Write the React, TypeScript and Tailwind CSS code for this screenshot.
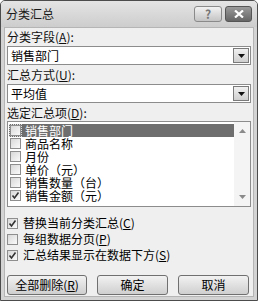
import React from 'react';

const fields = [
  { name: '销售部门', checked: false, active: true },
  { name: '商品名称', checked: false },
  { name: '月份', checked: false },
  { name: '单价（元）', checked: false },
  { name: '销售数量（台）', checked: false },
  { name: '销售金额（元）', checked: true },
];

function Check({ checked }: { checked: boolean }) {
  return (
    <span className="relative flex h-[11px] w-[11px] shrink-0 items-center justify-center border border-[#8e8e8e] bg-gradient-to-br from-[#d8d8d8] to-[#fafafa]">
      {checked && (
        <svg width="9" height="9" viewBox="0 0 9 9">
          <path d="M1.5 4.5 L3.5 7 L7.5 1.5" fill="none" stroke="#333" strokeWidth="1.6" />
        </svg>
      )}
    </span>
  );
}

function Combo({ value }: { value: string }) {
  return (
    <div className="flex h-[19px] items-center border border-[#8c8c8c] bg-white pl-[3px] pr-[1px]">
      <span className="flex-1 leading-none">{value}</span>
      <span className="flex h-[15px] w-[16px] items-center justify-center border border-[#7a7a7a] bg-gradient-to-b from-[#f0f0f0] to-[#cfcfcf]">
        <svg width="7" height="4" viewBox="0 0 7 4">
          <path d="M0 0 H7 L3.5 4 Z" fill="#111" />
        </svg>
      </span>
    </div>
  );
}

function Label({ text, hot }: { text: string; hot: string }) {
  return (
    <div className="h-[14px] leading-[14px] text-[#111]">
      {text}(<u>{hot}</u>):
    </div>
  );
}

export default function App() {
  return (
    <div className="h-[301px] w-[258px] bg-white font-['Noto_Sans_CJK_SC',sans-serif] text-[12px] text-black">
      <div className="flex h-full w-full flex-col overflow-hidden rounded-t-[5px] border border-[#4c4c4c] bg-[#d3d3d3]">
        {/* title bar */}
        <div className="flex h-[26px] shrink-0 items-center justify-between bg-gradient-to-b from-[#e4e4e4] to-[#cdcdcd] pl-[5px] pr-[5px]">
          <span className="text-[12px] text-[#1a1a1a]">分类汇总</span>
          <div className="flex gap-[3px]">
            <div className="flex h-[16px] w-[28px] items-center justify-center rounded-[3px] border border-[#8a8a8a] bg-gradient-to-b from-[#f2f2f2] to-[#c4c4c4] text-[12px] font-bold leading-none text-[#777]">
              ?
            </div>
            <div className="flex h-[16px] w-[27px] items-center justify-center rounded-[3px] border border-[#555] bg-gradient-to-b from-[#9a9a9a] to-[#666]">
              <svg width="10" height="8" viewBox="0 0 10 8">
                <path d="M1 0.5 L9 7.5 M9 0.5 L1 7.5" stroke="#fff" strokeWidth="2.2" />
              </svg>
            </div>
          </div>
        </div>

        {/* client area */}
        <div className="mx-[3px] mb-[3px] flex flex-1 flex-col border border-[#b5b5b5] bg-[#efefef] px-[2px] pt-[2px]">
          <Label text="分类字段" hot="A" />
          <div className="mt-[2px]">
            <Combo value="销售部门" />
          </div>
          <div className="mt-[3px]">
            <Label text="汇总方式" hot="U" />
          </div>
          <div className="mt-[2px]">
            <Combo value="平均值" />
          </div>
          <div className="mt-[3px]">
            <Label text="选定汇总项" hot="D" />
          </div>

          {/* list box */}
          <div className="mt-[1px] flex h-[86px] border border-[#8c8c8c] bg-white">
            <div className="flex-1 pl-[1px] pt-[2px]">
              {fields.map((f) => (
                <div
                  key={f.name}
                  className={
                    'flex h-[13px] items-center gap-[4px] pl-[1px] leading-none ' +
                    (f.active ? 'bg-[#6e6e6e] text-white' : '')
                  }
                >
                  <span className={f.active ? 'outline-1 outline-dotted outline-[#ddd]' : ''}>
                    <Check checked={f.checked} />
                  </span>
                  <span>{f.name}</span>
                </div>
              ))}
            </div>
            <div className="flex w-[16px] flex-col items-center justify-between bg-[#f4f4f4] py-[7px]">
              <svg width="7" height="4" viewBox="0 0 7 4">
                <path d="M0 4 H7 L3.5 0 Z" fill="#8a8a8a" />
              </svg>
              <svg width="7" height="4" viewBox="0 0 7 4">
                <path d="M0 0 H7 L3.5 4 Z" fill="#8a8a8a" />
              </svg>
            </div>
          </div>

          {/* options */}
          <div className="mt-[10px] flex flex-col gap-[4px]">
            <div className="flex h-[12px] items-center gap-[5px] leading-none">
              <Check checked />
              <span>替换当前分类汇总(<u>C</u>)</span>
            </div>
            <div className="flex h-[12px] items-center gap-[5px] leading-none">
              <Check checked={false} />
              <span>每组数据分页(<u>P</u>)</span>
            </div>
            <div className="flex h-[12px] items-center gap-[5px] leading-none">
              <Check checked />
              <span>汇总结果显示在数据下方(<u>S</u>)</span>
            </div>
          </div>

          {/* buttons */}
          <div className="mt-[14px] flex items-center gap-[10px]">
            <button className="h-[20px] w-[80px] rounded-[3px] border border-[#707070] bg-gradient-to-b from-[#f2f2f2] to-[#cfcfcf] leading-none">
              全部删除(<u>R</u>)
            </button>
            <button className="h-[20px] w-[71px] rounded-[3px] border border-[#707070] bg-gradient-to-b from-[#f2f2f2] to-[#cfcfcf] leading-none">
              确定
            </button>
            <button className="h-[20px] w-[71px] rounded-[3px] border border-[#707070] bg-gradient-to-b from-[#f2f2f2] to-[#cfcfcf] leading-none">
              取消
            </button>
          </div>
        </div>
      </div>
    </div>
  );
}
